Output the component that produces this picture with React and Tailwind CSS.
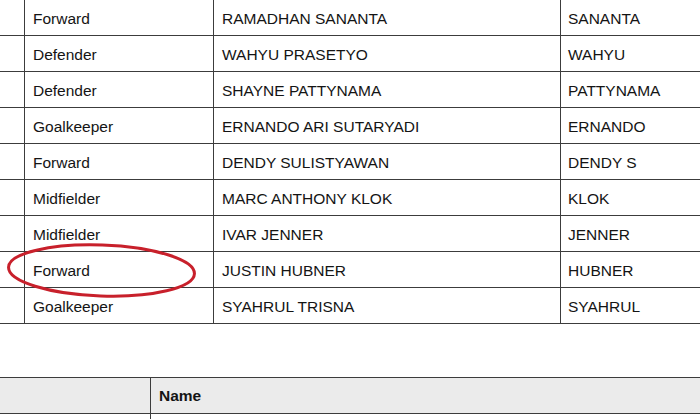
import React from "react";

const rows = [
  ["Forward", "RAMADHAN SANANTA", "SANANTA"],
  ["Defender", "WAHYU PRASETYO", "WAHYU"],
  ["Defender", "SHAYNE PATTYNAMA", "PATTYNAMA"],
  ["Goalkeeper", "ERNANDO ARI SUTARYADI", "ERNANDO"],
  ["Forward", "DENDY SULISTYAWAN", "DENDY S"],
  ["Midfielder", "MARC ANTHONY KLOK", "KLOK"],
  ["Midfielder", "IVAR JENNER", "JENNER"],
  ["Forward", "JUSTIN HUBNER", "HUBNER"],
  ["Goalkeeper", "SYAHRUL TRISNA", "SYAHRUL"],
];

export default function App() {
  return (
    <div
      className="relative w-[700px] h-[419px] overflow-hidden bg-white text-[#141414] text-[15.5px]"
      style={{ fontFamily: '"Liberation Sans", Arial, sans-serif' }}
    >
      <div className="flex flex-col">
        {rows.map((r, i) => (
          <div key={i} className="flex h-[36px] border-b border-[#3c3c3c]">
            <div className="w-[24px] shrink-0" />
            <div className="w-[189px] shrink-0 border-l border-[#3c3c3c] pl-2 pt-[2px] flex items-center">
              {r[0]}
            </div>
            <div className="w-[347px] shrink-0 border-l border-[#3c3c3c] pl-2 pt-[2px] flex items-center">
              {r[1]}
            </div>
            <div className="flex-1 border-l border-[#3c3c3c] pl-[7px] pt-[2px] flex items-center">
              {r[2]}
            </div>
          </div>
        ))}
      </div>

      <div className="mt-[53px] border-t border-[#3c3c3c]">
        <div className="flex h-[36px] bg-[#ebebeb] border-b border-[#3c3c3c]">
          <div className="w-[150px] shrink-0" />
          <div className="flex-1 border-l border-[#3c3c3c] pl-2 pt-[1px] flex items-center font-bold">
            Name
          </div>
        </div>
        <div className="flex h-[36px]">
          <div className="w-[150px] shrink-0" />
          <div className="flex-1 border-l border-[#3c3c3c]" />
        </div>
      </div>

      <svg
        className="absolute left-0 top-0 pointer-events-none"
        width="700"
        height="419"
      >
        <ellipse
          cx="101.5"
          cy="270.5"
          rx="93"
          ry="25.5"
          transform="rotate(2 101.5 270.5)"
          fill="none"
          stroke="#c8202b"
          strokeWidth="3"
        />
      </svg>
    </div>
  );
}
